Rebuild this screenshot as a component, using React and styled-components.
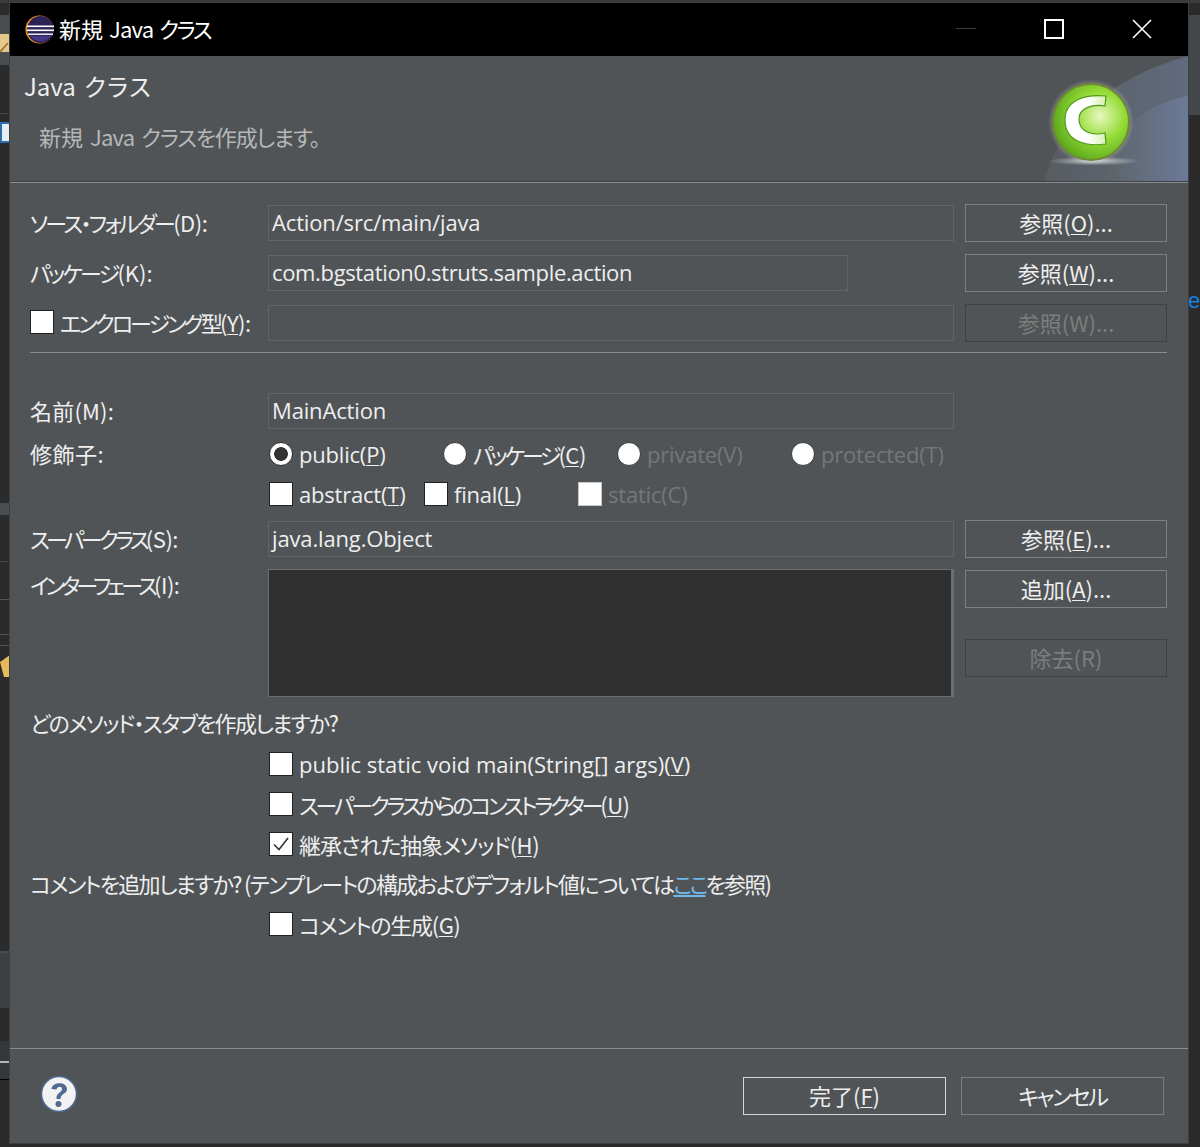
import React from "react";
import styled, { createGlobalStyle } from "styled-components";

const GlobalStyle = createGlobalStyle`
  html, body {
    margin: 0;
    padding: 0;
    background: #2b2b2b;
  }
`;

const FONT = `"Noto Sans CJK JP", "Noto Sans", sans-serif`;

const Page = styled.div`
  position: relative;
  width: 1200px;
  height: 1147px;
  padding: 3px 12px 4px 10px;
  box-sizing: border-box;
  overflow: hidden;
  font-family: ${FONT};
  font-feature-settings: "palt";
`;

const Behind = styled.svg`
  position: absolute;
  left: 0;
  top: 0;
`;

const BehindLetter = styled.span`
  position: absolute;
  left: 1188px;
  top: 288px;
  color: #1a7fe0;
  font-size: 22px;
  font-family: "Liberation Sans", sans-serif;
`;

const Win = styled.div`
  position: relative;
  height: 100%;
  display: flex;
  flex-direction: column;
  background: #505457;
  color: #eeeeee;
  font-size: 22px;
  box-shadow: 0 0 0 1px #3c3f41;
`;

const TitleBar = styled.div`
  height: 53px;
  flex: none;
  background: #000;
  color: #fff;
  display: flex;
  align-items: center;
  padding: 0 2px 0 15px;
`;

const TitleText = styled.div`
  flex: 1;
  margin: 0 0 3px 5px;
  word-spacing: 1px;
`;

const WinButton = styled.div`
  width: 88px;
  height: 51px;
  margin-bottom: 2px;
  display: flex;
  align-items: center;
  justify-content: center;
`;

const Header = styled.div`
  height: 127px;
  flex: none;
  position: relative;
  overflow: hidden;
  border-bottom: 1px solid #8a8d8f;
  box-shadow: inset 0 -1px 0 #404345;
  box-sizing: border-box;
  padding: 14px 0 0 14px;
`;

const HeaderTitle = styled.div`
  font-size: 24px;
  line-height: 32px;
  word-spacing: 3px;
`;

const HeaderSub = styled.div`
  color: #b5b7b8;
  line-height: 32px;
  margin: 18px 0 0 15px;
  word-spacing: 2px;
`;

const HeaderArt = styled.svg`
  position: absolute;
  right: 0;
  top: 0;
`;

const Body = styled.div`
  flex: 1;
  padding: 21px 21px 0 20px;
`;

const Row = styled.div`
  display: grid;
  grid-template-columns: 238px 686px 11px 202px;
  align-items: center;
  height: ${(p) => p.$h || 38}px;
  margin-top: ${(p) => p.$mt || 0}px;
  margin-bottom: ${(p) => p.$mb || 0}px;
`;

const Label = styled.div`
  display: flex;
  align-items: center;
  gap: 6px;
  white-space: nowrap;
  line-height: 30px;
  margin-bottom: 2px;
`;

// kana in the original font are much narrower than in Noto, so each string gets its own spacing
const Txt = styled.span`
  letter-spacing: ${(p) => p.$ls || "0"};
`;

const Field = styled.div`
  height: 36px;
  box-sizing: border-box;
  width: ${(p) => p.$w || "100%"};
  border: 1px solid #626567;
  padding: 0 0 2px 3px;
  display: flex;
  align-items: center;
  color: #eeeeee;
  font-family: "Open Sans", ${FONT};
  font-size: 22px;
  letter-spacing: ${(p) => p.$ls || "-0.15px"};
`;

const Btn = styled.div`
  height: 38px;
  box-sizing: border-box;
  padding-bottom: 2px;
  border: 1px solid ${(p) => (p.$off ? "#3f4244" : p.$def ? "#d6d6d6" : "#7d8082")};
  width: ${(p) => p.$w || 202}px;
  grid-column: 4;
  display: flex;
  align-items: center;
  justify-content: center;
  color: ${(p) => (p.$off ? "#7d7d7d" : "#eeeeee")};
  white-space: nowrap;
`;

const U = styled.span`
  text-decoration: underline;
  text-underline-offset: 2px;
  text-decoration-thickness: 1px;
`;

const Rule = styled.div`
  height: 1px;
  background: #8a8d8f;
  margin: 10px 0 40px;
`;

const Box = styled.span`
  flex: none;
  width: 24px;
  height: 24px;
  box-sizing: border-box;
  background: #fff;
  border: 1px solid ${(p) => (p.$off ? "#c8c8c8" : "#222")};
  display: inline-flex;
  align-items: center;
  justify-content: center;
`;

const Radio = styled.span`
  flex: none;
  width: 24px;
  height: 24px;
  box-sizing: border-box;
  border-radius: 50%;
  border: 1px solid #333;
  background: ${(p) => (p.$on ? "radial-gradient(circle, #333 0 6.5px, #fff 7.2px)" : "#fff")};
`;

const Opts = styled.div`
  display: grid;
  grid-template-columns: ${(p) => p.$cols};
  align-items: center;
  padding-left: 1px;
`;

const Opt = styled.div`
  display: flex;
  align-items: center;
  gap: 6px;
  white-space: nowrap;
  color: ${(p) => (p.$off ? "#74777a" : "inherit")};
`;

const Latin = styled.span`
  font-family: "Open Sans", ${FONT};
  letter-spacing: ${(p) => p.$ls || "-0.2px"};
`;

const ModRow = styled.div`
  display: grid;
  grid-template-columns: 238px 1fr;
  align-items: center;
  height: 40px;
  margin-top: ${(p) => p.$mt || 0}px;
`;

const ListBox = styled.div`
  height: 128px;
  box-sizing: border-box;
  background: #2f2f2f;
  border: 1px solid #6b6e70;
  border-right: 3px solid #6b6e70;
`;

const ListRow = styled.div`
  display: grid;
  grid-template-columns: 238px 686px 11px 202px;
  align-items: start;
  margin-top: 11px;
`;

const SideBtns = styled.div`
  grid-column: 4;
  display: flex;
  flex-direction: column;
  gap: 31px;
  padding-top: 1px;
`;

const TextLine = styled.div`
  height: 40px;
  box-sizing: border-box;
  display: flex;
  align-items: center;
  white-space: nowrap;
  margin-top: ${(p) => p.$mt || 0}px;
  padding-bottom: ${(p) => p.$up || 0}px;
`;

const CheckLine = styled(TextLine)`
  padding-left: 239px;
  gap: 6px;

  ${Txt} {
    margin-bottom: 2px;
  }
`;

const Anchor = styled.span`
  color: #6fb8ea;
  text-decoration: underline;
  letter-spacing: -3px;
`;

const Footer = styled.div`
  height: 95px;
  box-sizing: border-box;
  flex: none;
  border-top: 1px solid #8a8d8f;
  display: flex;
  align-items: flex-start;
  padding: 28px 24px 0 30px;
  gap: 15px;
`;

const HelpWrap = styled.div`
  margin-top: -2px;
  flex: 1;
`;

function Backdrop() {
  return (
    <Behind width="1200" height="1147" viewBox="0 0 1200 1147">
      <rect x="0" y="0" width="1200" height="3" fill="#3a3a3a" />
      <rect x="0" y="15" width="10" height="50" fill="#4a4d4f" />
      <path d="M0 34H10V52H0z" fill="#e6c88c" />
      <path d="M0 52L8 43" stroke="#9c6a2a" strokeWidth="1.5" />
      <rect x="0" y="113" width="10" height="1" fill="#444" />
      <rect x="0" y="122" width="10" height="21" fill="#2a6fb0" />
      <rect x="2" y="124" width="8" height="17" fill="#e8eef4" />
      <rect x="0" y="503" width="10" height="12" fill="#4a4e50" />
      <rect x="0" y="561" width="10" height="1" fill="#444" />
      <rect x="0" y="599" width="10" height="1" fill="#555" />
      <rect x="0" y="634" width="10" height="1" fill="#555" />
      <rect x="0" y="645" width="10" height="1" fill="#555" />
      <path d="M0 662L10 655V677H4z" fill="#e6b95c" />
      <rect x="0" y="951" width="10" height="2" fill="#4a4d4f" />
      <rect x="0" y="953" width="10" height="55" fill="#3d4042" />
      <rect x="0" y="1041" width="10" height="38" fill="#33383b" />
      <rect x="0" y="1061" width="10" height="2" fill="#b0b8bb" />
      <rect x="0" y="1079" width="10" height="1" fill="#000" />
      <rect x="1188" y="15" width="12" height="100" fill="#45484a" />
    </Behind>
  );
}

function Check() {
  return (
    <svg width="20" height="20" viewBox="0 0 20 20">
      <path d="M3 10.5 L8 15.5 L17 4" fill="none" stroke="#333" strokeWidth="1.6" />
    </svg>
  );
}

function Eclipse() {
  return (
    <svg width="29" height="29" viewBox="0 0 29 29">
      <circle cx="14.5" cy="14.5" r="14" fill="#f7941e" />
      <circle cx="15.5" cy="14.5" r="13.5" fill="#2c2255" />
      <path d="M5 21a13 13 0 0 0 21 0z" fill="#473788" />
      <rect x="2" y="10.5" width="27" height="1.6" fill="#fff" />
      <rect x="2" y="14.5" width="27" height="1.6" fill="#fff" />
      <rect x="3" y="18.5" width="25" height="1.4" fill="#fff" />
    </svg>
  );
}

function ClassIcon() {
  return (
    <HeaderArt width="178" height="125" viewBox="0 0 178 125">
      <defs>
        <radialGradient id="ball" cx="0.62" cy="0.42" r="0.7">
          <stop offset="0" stopColor="#e8f8c0" />
          <stop offset="0.45" stopColor="#96dc38" />
          <stop offset="1" stopColor="#4f9e14" />
        </radialGradient>
        <radialGradient id="glow" cx="0.5" cy="0.5" r="0.5">
          <stop offset="0.8" stopColor="#ffffff" stopOpacity="0.35" />
          <stop offset="1" stopColor="#ffffff" stopOpacity="0" />
        </radialGradient>
        <linearGradient id="swoosh" x1="0" x2="1" y1="0" y2="0">
          <stop offset="0" stopColor="#5c6265" />
          <stop offset="1" stopColor="#6b7a98" />
        </linearGradient>
        <linearGradient id="letter" x1="0" x2="1" y1="0" y2="0">
          <stop offset="0" stopColor="#ffffff" />
          <stop offset="0.55" stopColor="#ffffff" />
          <stop offset="1" stopColor="#d8f0b0" />
        </linearGradient>
        <radialGradient id="shade" cx="0.5" cy="0.5" r="0.5">
          <stop offset="0" stopColor="#ffffff" stopOpacity="0.7" />
          <stop offset="1" stopColor="#ffffff" stopOpacity="0" />
        </radialGradient>
      </defs>
      <path d="M34 125C50 65 105 20 178 0V125z" fill="url(#swoosh)" opacity="0.6" />
      <path d="M92 125C95 85 130 48 178 40V125z" fill="url(#swoosh)" />
      <circle cx="81" cy="66" r="43" fill="url(#glow)" />
      <ellipse cx="84" cy="105" rx="46" ry="4.5" fill="url(#shade)" />
      <circle cx="81" cy="66" r="38" fill="url(#ball)" stroke="#6f8a35" strokeWidth="2" />
      <path
        d="M96 40 C75 38 55 44 55 64 C55 85 75 91 96 88 L95 77 C82 80 69 76 69 63 C69 52 82 48 95 50 z"
        fill="url(#letter)"
        stroke="#4e9a1c"
        strokeWidth="1.2"
      />
    </HeaderArt>
  );
}

function HelpIcon() {
  return (
    <svg width="38" height="38" viewBox="0 0 38 38">
      <circle cx="19" cy="19" r="17.5" fill="#f2f2f2" stroke="#4f6a92" strokeWidth="1.5" />
      <path
        d="M11.5 14 C12 6.5 27 6 27 14 C27 19 20.5 18.5 20.5 24 L16.5 24 C16 17.5 22 17.5 22 14 C22 11 17 11 16.5 14.5 z"
        fill="#4f6a92"
      />
      <circle cx="18.5" cy="29" r="3" fill="#4f6a92" />
    </svg>
  );
}

export default function App() {
  return (
    <Page>
      <GlobalStyle />
      <Backdrop />
      <BehindLetter>e</BehindLetter>
      <Win>
        <TitleBar>
          <Eclipse />
          <TitleText>新規 <Txt $ls="-0.8px">Java</Txt> <Txt $ls="-2.3px">クラス</Txt></TitleText>
          <WinButton>
            <svg width="20" height="2"><rect width="20" height="1" fill="#3e3e3e" /></svg>
          </WinButton>
          <WinButton>
            <svg width="20" height="20"><rect x="1" y="1" width="18" height="18" fill="none" stroke="#fff" strokeWidth="2" /></svg>
          </WinButton>
          <WinButton>
            <svg width="20" height="20"><path d="M1 1L19 19M19 1L1 19" stroke="#fff" strokeWidth="1.6" /></svg>
          </WinButton>
        </TitleBar>
        <Header>
          <HeaderTitle>Java <Txt $ls="1.6px">クラス</Txt></HeaderTitle>
          <HeaderSub>新規 <Txt $ls="-0.8px">Java</Txt> <Txt $ls="-1.2px">クラスを作成します。</Txt></HeaderSub>
          <ClassIcon />
        </Header>
        <Body>
          <Row $mb={12}>
            <Label><span><Txt $ls="-2.7px">ソース・フォルダー</Txt><Txt $ls="-0.5px">(D):</Txt></span></Label>
            <Field>Action/src/main/java</Field>
            <Btn><span>参照(<U>O</U>)...</span></Btn>
          </Row>
          <Row $mb={12}>
            <Label><span><Txt $ls="-2.8px">パッケージ</Txt>(K):</span></Label>
            <Field $w="580px" $ls="-0.35px">com.bgstation0.struts.sample.action</Field>
            <Btn><span>参照(<U>W</U>)...</span></Btn>
          </Row>
          <Row>
            <Label>
              <Box />
              <span><Txt $ls="-2.9px">エンクロージング型</Txt><Txt $ls="-0.5px">(<U>Y</U>):</Txt></span>
            </Label>
            <Field />
            <Btn $off><span>参照(W)...</span></Btn>
          </Row>
          <Rule />
          <Row $h={36}>
            <Label><Txt $ls="0.2px">名前(M):</Txt></Label>
            <Field>MainAction</Field>
          </Row>
          <ModRow $mt={5}>
            <Label><Txt $ls="0.5px">修飾子:</Txt></Label>
            <Opts $cols="174px 174px 174px 174px">
              <Opt><Radio $on /><Latin>public(<U>P</U>)</Latin></Opt>
              <Opt><Radio /><span><Txt $ls="-3.2px">パッケージ</Txt><Txt $ls="-0.5px">(<U>C</U>)</Txt></span></Opt>
              <Opt $off><Radio /><Latin>private(V)</Latin></Opt>
              <Opt $off><Radio /><Latin>protected(T)</Latin></Opt>
            </Opts>
          </ModRow>
          <ModRow>
            <span />
            <Opts $cols="155px 154px 200px">
              <Opt><Box /><Latin>abstract(<U>T</U>)</Latin></Opt>
              <Opt><Box /><Latin>final(<U>L</U>)</Latin></Opt>
              <Opt $off><Box $off /><Latin>static(C)</Latin></Opt>
            </Opts>
          </ModRow>
          <Row $mt={6}>
            <Label><span><Txt $ls="-3.7px">スーパークラス</Txt><Txt $ls="-0.5px">(S):</Txt></span></Label>
            <Field>java.lang.Object</Field>
            <Btn><span>参照(<U>E</U>)...</span></Btn>
          </Row>
          <ListRow>
            <Label><span><Txt $ls="-3.9px">インターフェース</Txt><Txt $ls="-0.5px">(I):</Txt></span></Label>
            <ListBox />
            <SideBtns>
              <Btn><span>追加(<U>A</U>)...</span></Btn>
              <Btn $off><span>除去(R)</span></Btn>
            </SideBtns>
          </ListRow>
          <TextLine $mt={5}><Txt $ls="-1.7px">どのメソッド・スタブを作成しますか?</Txt></TextLine>
          <CheckLine $mt={2}><Box /><Latin $ls="0">public static void main(String[] args)(<U>V</U>)</Latin></CheckLine>
          <CheckLine><Box /><span><Txt $ls="-3.2px">スーパークラスからのコンストラクター</Txt><Txt $ls="-0.5px">(<U>U</U>)</Txt></span></CheckLine>
          <CheckLine><Box><Check /></Box><span><Txt $ls="-1.1px">継承された抽象メソッド</Txt><Txt $ls="-0.5px">(<U>H</U>)</Txt></span></CheckLine>
          <TextLine $up={2}><Txt $ls="-1.72px">コメントを追加しますか? (テンプレートの構成およびデフォルト値については<Anchor>ここ</Anchor>を参照)</Txt></TextLine>
          <CheckLine><Box /><span><Txt $ls="-1.3px">コメントの生成</Txt><Txt $ls="-0.5px">(<U>G</U>)</Txt></span></CheckLine>
        </Body>
        <Footer>
          <HelpWrap><HelpIcon /></HelpWrap>
          <Btn $def $w={203}><span>完了(<U>F</U>)</span></Btn>
          <Btn $w={203}><Txt $ls="-2.2px">キャンセル</Txt></Btn>
        </Footer>
      </Win>
    </Page>
  );
}
